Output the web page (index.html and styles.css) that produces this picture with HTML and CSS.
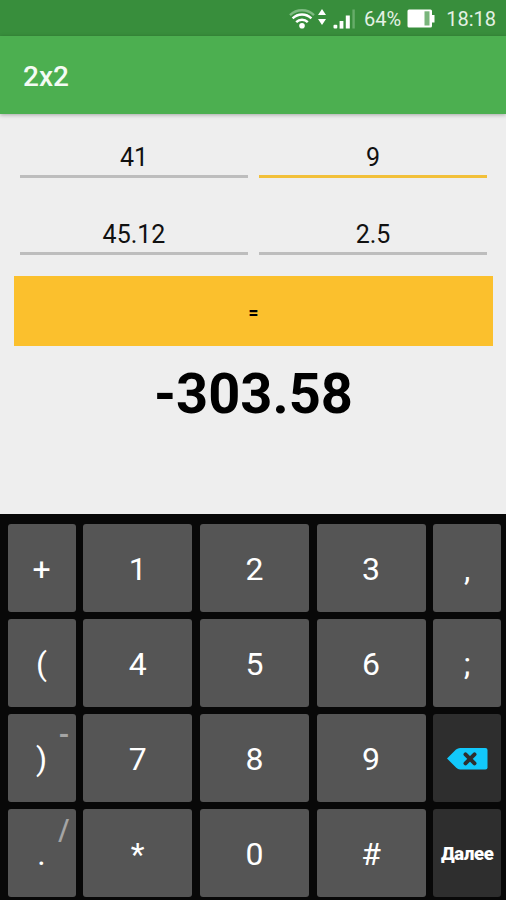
FILE: index.html
```html
<!DOCTYPE html>
<html lang="ru">
    <head>
        <meta charset="utf-8">
        <title>2x2</title>
        <link rel="stylesheet" href="styles.css">
    </head>

    <body>
        <div class="statusbar">
            <svg class="wifi" width="40" height="24" viewBox="0 0 40 24">
                <g fill="none" stroke="#fff" stroke-width="2.4">
                    <path d="M1 8.2a17 17 0 0 1 24 0" stroke="#7fbb82"/>
                    <path d="M3.6 11.4a13.2 13.2 0 0 1 18.8 0"/>
                    <path d="M7.2 15.2a8.2 8.2 0 0 1 11.6 0"/>
                </g>
                <circle cx="13" cy="18.8" r="2.8" fill="#fff"/>
                <path d="M33 2l4 6h-8zM33 18l4-6h-8z" fill="#fff"/>
            </svg>
            <svg class="signal" width="24" height="20" viewBox="0 0 24 20">
                <rect x="0.5" y="15.8" width="3.8" height="3.8" rx="1" fill="#fff"/>
                <rect x="6.6" y="12" width="3.8" height="7.6" fill="#fff"/>
                <rect x="12.8" y="6.5" width="4" height="13" fill="#fff"/>
                <rect x="19.4" y="0.5" width="2.4" height="19" fill="#67ac6a"/>
            </svg>
            <span class="percent">64%</span>
            <svg class="battery" width="28" height="20" viewBox="0 0 28 20">
                <rect x="0.5" y="0.5" width="24.5" height="18" rx="1.5" fill="#fff"/>
                <rect x="24" y="6" width="3.5" height="7.5" fill="#fff"/>
                <rect x="17.5" y="2.3" width="5" height="14.2" fill="#79b57b"/>
            </svg>
            <span class="clock">18:18</span>
        </div>

        <div class="toolbar">
            <h1>2x2</h1>
        </div>

        <div class="content">
            <form class="matrix">
                <input type="text" class="cell" value="41">
                <input type="text" class="cell active" value="9">
                <input type="text" class="cell" value="45.12">
                <input type="text" class="cell" value="2.5">
            </form>
            <button class="equals">=</button>
            <div class="result">-303.58</div>
        </div>

        <div class="keyboard">
            <div class="key">+</div>
            <div class="key">1</div>
            <div class="key">2</div>
            <div class="key">3</div>
            <div class="key">,</div>

            <div class="key">(</div>
            <div class="key">4</div>
            <div class="key">5</div>
            <div class="key">6</div>
            <div class="key">;</div>

            <div class="key">)<span class="hint minus">-</span></div>
            <div class="key">7</div>
            <div class="key">8</div>
            <div class="key">9</div>
            <div class="key dark">
                <svg width="42" height="22" viewBox="0 0 42 22">
                    <path d="M1 10.5L10 1.5Q12 0 14 0H39.5Q41.5 0 41.5 2V19.5Q41.5 21.5 39.5 21.5H14Q12 21.5 10 19.5Z" fill="#12c8fb"/>
                    <path d="M19.5 6.3L28.5 15.3M28.5 6.3L19.5 15.3" stroke="#2e2e2e" stroke-width="4" stroke-linecap="round"/>
                </svg>
            </div>

            <div class="key">.<span class="hint">/</span></div>
            <div class="key">*</div>
            <div class="key">0</div>
            <div class="key">#</div>
            <div class="key dark next">Далее</div>
        </div>
    </body>
</html>
```

FILE: styles.css
```css
* {
    box-sizing: border-box;
}
body {
    margin: 0;
    height: 900px;
    display: flex;
    flex-direction: column;
    background-color: #eeeeee;
    font-family: Roboto, "Liberation Sans", sans-serif;
    overflow: hidden;
}

.statusbar {
    height: 36px;
    display: flex;
    align-items: center;
    justify-content: flex-end;
    padding: 2px 10px 0 0;
    background-color: #388e3c;
    color: #e4f1e4;
    font-size: 20px;
}
.wifi {
    margin-right: 4px;
}
.signal {
    margin-right: 7px;
}
.percent {
    margin-right: 6px;
}
.battery {
    margin-right: 11px;
}

.toolbar {
    height: 78px;
    display: flex;
    align-items: center;
    padding: 3px 23px 0;
    background-color: #4caf50;
    box-shadow: 0 1px 4px rgba(0, 0, 0, 0.3);
}
h1 {
    margin: 0;
    color: #f4fbf4;
    font-size: 28px;
    font-weight: 500;
}

.content {
    height: 400px;
    padding: 22px 13px 0 14px;
}
.matrix {
    display: grid;
    grid-template-columns: 228px 228px;
    gap: 35px 11px;
    padding-left: 6px;
}
.cell {
    width: 100%;
    height: 42px;
    padding: 4px 0 0;
    border: none;
    border-bottom: 3px solid #bdbdbd;
    background: none;
    color: #111;
    font-family: inherit;
    font-size: 25px;
    text-align: center;
    outline: none;
}
.active {
    border-bottom-color: #f2c039;
}
.equals {
    display: block;
    width: 479px;
    height: 70px;
    margin-top: 21px;
    padding-top: 2px;
    border: none;
    background-color: #fbc02d;
    color: #000;
    font-family: inherit;
    font-size: 17px;
    font-weight: 900;
}
.result {
    margin-top: 15px;
    color: #000;
    font-size: 56px;
    font-weight: 700;
    line-height: 66px;
    text-align: center;
}

.keyboard {
    flex: 1;
    display: grid;
    grid-template-columns: 68px 109px 109px 109px 68px;
    grid-template-rows: repeat(4, 88px);
    gap: 7px 7.7px;
    padding: 10px 0 0 7.5px;
    background-color: #080808;
}
.key {
    position: relative;
    display: flex;
    align-items: center;
    justify-content: center;
    padding-top: 2px;
    border-radius: 3px;
    background-color: #555555;
    color: #fff;
    font-size: 32px;
}
.dark {
    background-color: #2e2e2e;
}
.next {
    font-size: 18.5px;
    font-weight: 900;
    letter-spacing: -0.3px;
}
/* long-press symbol in the key corner */
.hint {
    position: absolute;
    top: 4px;
    right: 6px;
    color: #a5a5a5;
    font-size: 29px;
    font-weight: 500;
}
.minus {
    font-weight: 700;
    font-size: 28px;
    top: 4px;
}
```
